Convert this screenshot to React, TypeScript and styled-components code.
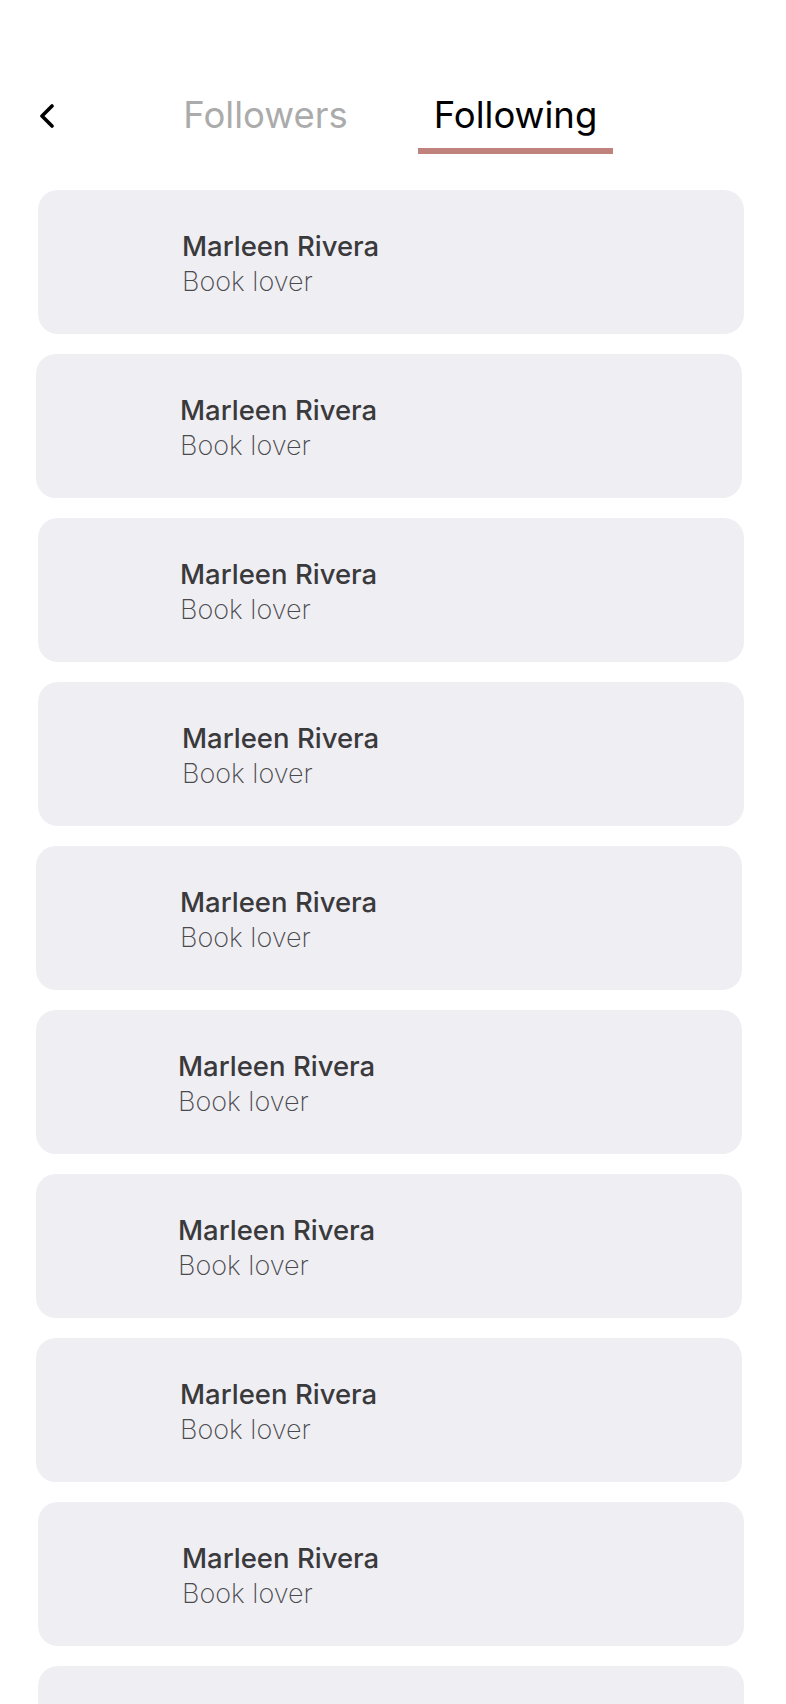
import styled, { createGlobalStyle } from "styled-components";

const GlobalStyle = createGlobalStyle`
  html, body {
    margin: 0;
    padding: 0;
    background: #ffffff;
    font-family: Inter, "Noto Sans", "Liberation Sans", sans-serif;
  }
`;

const Page = styled.div`
  display: flex;
  flex-direction: column;
  padding-top: 94px;
`;

const Header = styled.div`
  display: flex;
  align-items: flex-start;
  padding-left: 39px;
`;

const BackButton = styled.button`
  width: 16px;
  height: 24px;
  margin-top: 10px;
  padding: 0;
  border: none;
  background: none;
  display: flex;
  cursor: pointer;
`;

const Tabs = styled.div`
  display: flex;
  gap: 55px;
  margin-left: 113px;
`;

const Tab = styled.div`
  width: 195px;
  display: flex;
  flex-direction: column;
  align-items: center;
`;

const TabLabel = styled.span<{ $active?: boolean }>`
  font-size: 36.5px;
  line-height: 42px;
  font-weight: 400;
  color: ${(p) => (p.$active ? "#000000" : "#ababab")};
`;

const Underline = styled.div<{ $active?: boolean }>`
  width: 100%;
  height: 6px;
  margin-top: 12px;
  background: ${(p) => (p.$active ? "#bf827d" : "transparent")};
`;

const List = styled.div`
  display: flex;
  flex-direction: column;
  gap: 20px;
  margin-top: 36px;
`;

const Card = styled.div<{ $shift: number; $inset: number }>`
  width: 706px;
  height: 144px;
  margin-left: ${(p) => 38 + p.$shift}px;
  padding-left: ${(p) => 144 + p.$inset}px;
  box-sizing: border-box;
  border-radius: 20px;
  background: #efeef3;
  display: flex;
  flex-direction: column;
  justify-content: center;
`;

const Name = styled.div`
  font-size: 27.5px;
  line-height: 35px;
  font-weight: 500;
  color: #3a3a3c;
  margin-top: 4px;
`;

const Bio = styled.div`
  font-size: 27px;
  line-height: 35px;
  font-weight: 250;
  color: #4a4a4e;
`;

const people = [
  { shift: 0, inset: 0 },
  { shift: -2, inset: 0 },
  { shift: 0, inset: -2 },
  { shift: 0, inset: 0 },
  { shift: -2, inset: 0 },
  { shift: -2, inset: -2 },
  { shift: -2, inset: -2 },
  { shift: -2, inset: 0 },
  { shift: 0, inset: 0 },
  { shift: 0, inset: 0 },
];

const App = () => {
  return (
    <Page>
      <GlobalStyle />
      <Header>
        <BackButton aria-label="Back">
          <svg width="16" height="24" viewBox="0 0 16 24" fill="none">
            <path
              d="M13 2 L3 12 L13 22"
              stroke="#000"
              strokeWidth="3.6"
              strokeLinecap="round"
              strokeLinejoin="round"
            />
          </svg>
        </BackButton>
        <Tabs>
          <Tab>
            <TabLabel>Followers</TabLabel>
            <Underline />
          </Tab>
          <Tab>
            <TabLabel $active>Following</TabLabel>
            <Underline $active />
          </Tab>
        </Tabs>
      </Header>

      <List>
        {people.map((p, i) => (
          <Card key={i} $shift={p.shift} $inset={p.inset}>
            <Name>Marleen Rivera</Name>
            <Bio>Book lover</Bio>
          </Card>
        ))}
      </List>
    </Page>
  );
};

export default App;
